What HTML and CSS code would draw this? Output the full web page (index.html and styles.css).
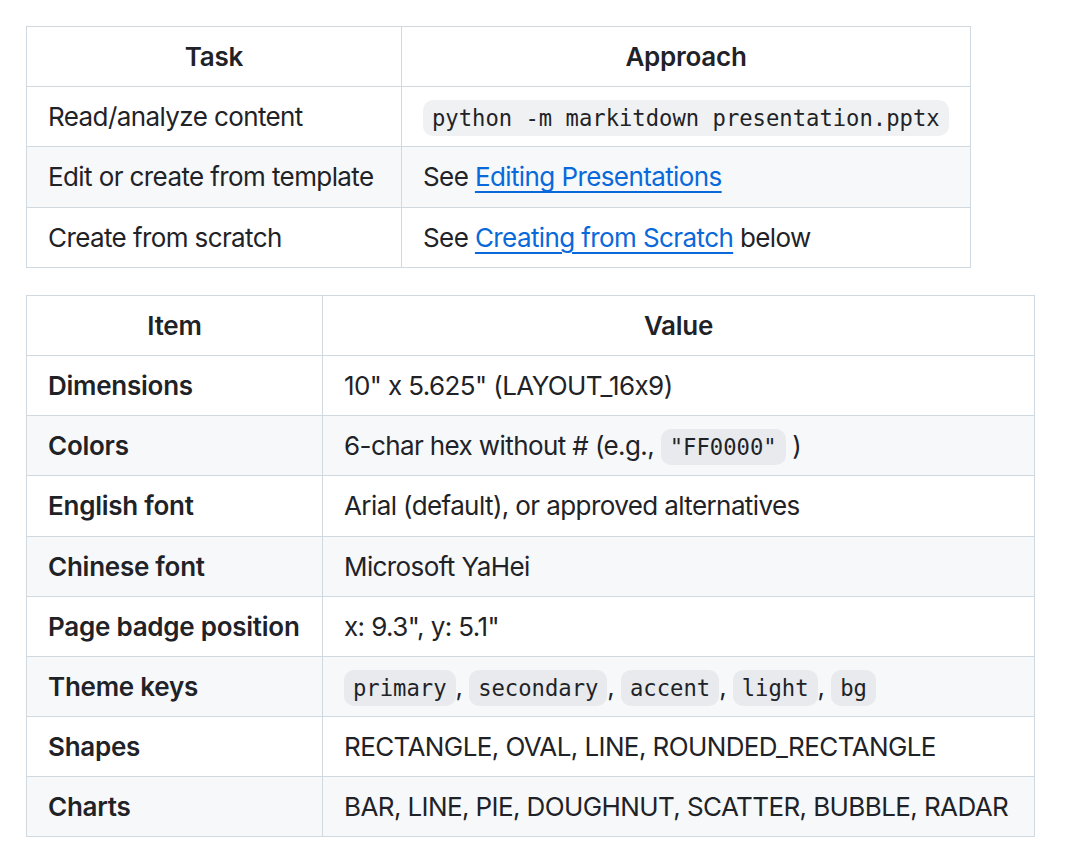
FILE: index.html
```html
<!DOCTYPE html>
<html lang="en">
<head>
<meta charset="utf-8">
<title>Tables</title>
<link rel="stylesheet" href="styles.css">
</head>
<body>
<div class="doc">
  <table class="md-table t1">
    <colgroup><col class="c1a"><col></colgroup>
    <thead>
      <tr><th>Task</th><th>Approach</th></tr>
    </thead>
    <tbody>
      <tr><td>Read/analyze content</td><td><code>python -m markitdown presentation.pptx</code></td></tr>
      <tr><td>Edit or create from template</td><td>See <a href="#">Editing Presentations</a></td></tr>
      <tr><td>Create from scratch</td><td>See <a href="#">Creating from Scratch</a> below</td></tr>
    </tbody>
  </table>

  <table class="md-table t2">
    <colgroup><col class="c2a"><col></colgroup>
    <thead>
      <tr><th>Item</th><th>Value</th></tr>
    </thead>
    <tbody>
      <tr><td><strong>Dimensions</strong></td><td>10" x 5.625" (LAYOUT_16x9)</td></tr>
      <tr><td><strong>Colors</strong></td><td>6-char hex without # (e.g., <code>"FF0000"</code> )</td></tr>
      <tr><td><strong>English font</strong></td><td>Arial (default), or approved alternatives</td></tr>
      <tr><td><strong>Chinese font</strong></td><td>Microsoft YaHei</td></tr>
      <tr><td><strong>Page badge position</strong></td><td>x: 9.3", y: 5.1"</td></tr>
      <tr><td><strong>Theme keys</strong></td><td><code>primary</code>, <code>secondary</code>, <code>accent</code>, <code>light</code>, <code>bg</code></td></tr>
      <tr><td><strong>Shapes</strong></td><td>RECTANGLE, OVAL, LINE, ROUNDED_RECTANGLE</td></tr>
      <tr><td><strong>Charts</strong></td><td>BAR, LINE, PIE, DOUGHNUT, SCATTER, BUBBLE, RADAR</td></tr>
    </tbody>
  </table>
</div>
</body>
</html>
```

FILE: styles.css
```css
html, body {
  margin: 0;
  padding: 0;
  background: #ffffff;
}

body {
  font-family: Inter, "Liberation Sans", Arial, sans-serif;
  font-size: 26px;
  line-height: 39px;
  color: #1f2328;
  font-feature-settings: "calt" 0;
  letter-spacing: -0.6px;
}

.doc {
  padding: 26px 0 0 26px;
}

.md-table {
  border-collapse: collapse;
  border-spacing: 0;
  table-layout: fixed;
  margin: 0 0 27px 0;
}

.t1 { width: 945px; }
.t2 { width: 1009px; }

.c1a { width: 375px; }
.c2a { width: 296px; }

.md-table th,
.md-table td {
  border: 1px solid #d1d9e0;
  padding: 10px 21px 10.2px;
  height: 39px;
  text-align: left;
  white-space: nowrap;
}

.md-table th {
  font-weight: 600;
  letter-spacing: -0.25px;
  text-align: center;
}

.md-table tbody tr:nth-child(2n) {
  background: #f6f8fa;
}

.md-table strong {
  font-weight: 600;
  letter-spacing: -0.25px;
}

.md-table a {
  color: #0969da;
  text-decoration: underline;
  text-underline-offset: 5px;
  text-decoration-thickness: 2px;
}

.md-table code {
  font-family: "DejaVu Sans Mono", "Liberation Mono", monospace;
  font-size: 22.2px;
  line-height: 1;
  letter-spacing: 0;
  padding: 5px 9px;
  border-radius: 10px;
  background: rgba(129, 139, 152, 0.12);
  color: #1f2328;
}
```
